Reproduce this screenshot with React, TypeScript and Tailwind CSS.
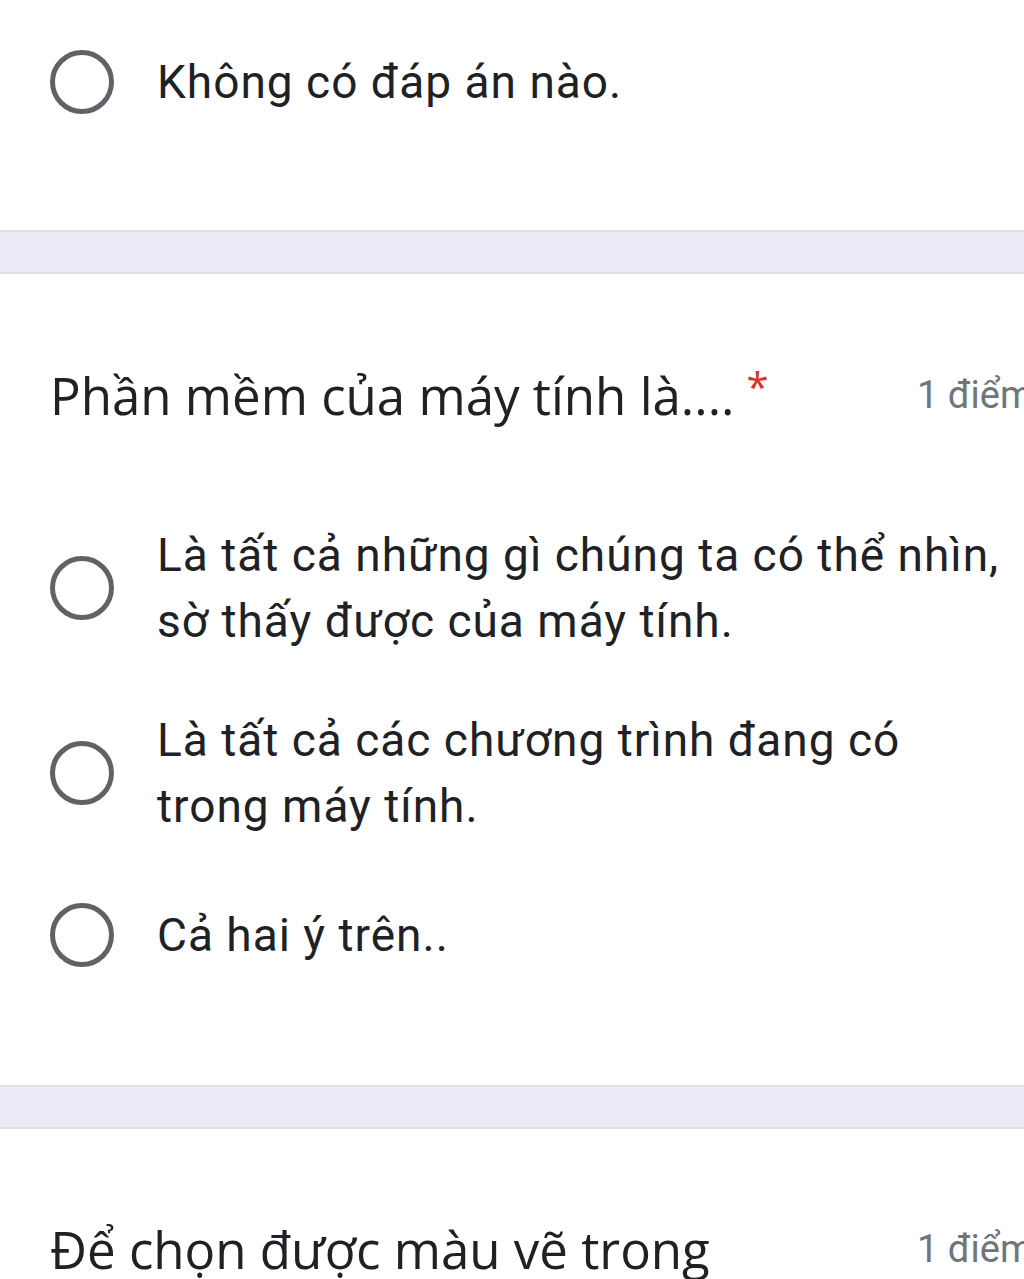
import React from "react";

const optFont = { fontFamily: "Roboto, 'Liberation Sans', sans-serif" };
const titleFont = { fontFamily: "'Open Sans', Roboto, sans-serif" };

function Radio() {
  return (
    <div className="w-[64px] h-[64px] rounded-full border-[5px] border-[#5f6368] shrink-0" />
  );
}

function Option({ lines }: { lines: string[] }) {
  return (
    <div className="flex items-center pl-[50px]">
      <Radio />
      <div
        className="ml-[43px] text-[46px] leading-[66px] tracking-[1px] text-[#202124]"
        style={optFont}
      >
        {lines.map((l, i) => (
          <div key={i} className="whitespace-nowrap">
            {l}
          </div>
        ))}
      </div>
    </div>
  );
}

function Band() {
  return <div className="h-[44px] bg-[#edeaf7] border-y-2 border-[#e0dfe6]" />;
}

function Title({ text, star }: { text: string; star?: boolean }) {
  return (
    <div className="flex items-center pl-[50px] h-[64px]">
      <div
        className="flex-1 min-w-0 whitespace-nowrap text-[51px] leading-[64px] text-[#202124]"
        style={titleFont}
      >
        {text}
        {star && (
          <span className="text-[#d93025] text-[40px] align-top ml-[12px] relative top-[-8px]">
            *
          </span>
        )}
      </div>
      <div
        className="w-[107px] shrink-0 whitespace-nowrap text-[38px] text-[#70757a]"
        style={optFont}
      >
        1 điểm
      </div>
    </div>
  );
}

export default function App() {
  return (
    <div className="w-[1024px] h-[1279px] overflow-hidden bg-white">
      <div className="pt-[49px] pb-[115px]">
        <Option lines={["Không có đáp án nào."]} />
      </div>
      <Band />
      <div className="pt-[89px] pb-[117px]">
        <Title text="Phần mềm của máy tính là...." star />
        <div className="mt-[95px] flex flex-col gap-[53px]">
          <Option
            lines={[
              "Là tất cả những gì chúng ta có thể nhìn,",
              "sờ thấy được của máy tính.",
            ]}
          />
          <Option lines={["Là tất cả các chương trình đang có", "trong máy tính."]} />
          <div className="mt-[10px]">
            <Option lines={["Cả hai ý trên.."]} />
          </div>
        </div>
      </div>
      <Band />
      <div className="pt-[88px]">
        <Title text="Để chọn được màu vẽ trong" />
      </div>
    </div>
  );
}
